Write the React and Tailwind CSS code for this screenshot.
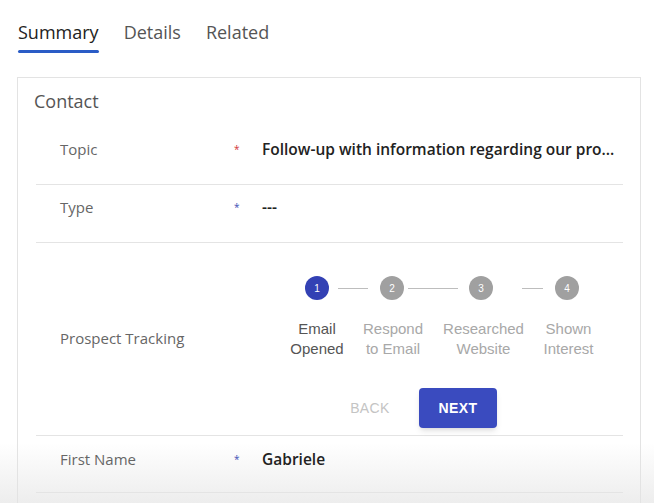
import React from 'react';

const segoe = { fontFamily: '"Open Sans", "Noto Sans", sans-serif' };

const steps = [
  { n: 1, label: ['Email', 'Opened'], active: true, w: 'w-[52px]' },
  { n: 2, label: ['Respond', 'to Email'], w: 'w-[60px]' },
  { n: 3, label: ['Researched', 'Website'], w: 'w-[81px]' },
  { n: 4, label: ['Shown', 'Interest'], w: 'w-[49px]' },
];

function Star({ color }) {
  return <span className={`text-[10px] leading-none ${color}`}>*</span>;
}

function FieldRow({ label, value, star, starColor, className = '' }) {
  return (
    <div className={`flex border-b border-[#e4e4e4] ${className}`}>
      <div className="w-[200px] pl-6 text-[15px] text-[#666]">{label}</div>
      <div className="w-[26px] -mt-[3px] -ml-[2px]">
        {star && <Star color={starColor} />}
      </div>
      <div className="flex-1 pl-[2px] text-[15.5px] font-semibold text-[#222] whitespace-nowrap overflow-hidden text-ellipsis">{value}</div>
    </div>
  );
}

function Circle({ n, active }) {
  return (
    <div
      className={`w-6 h-6 rounded-full flex items-center justify-center text-[10px] text-white ${active ? 'bg-[#3341b4]' : 'bg-[#a0a0a0]'}`}
    >
      {n}
    </div>
  );
}

function Stepper() {
  return (
    <div className="flex flex-col" style={{ fontFamily: '"Liberation Sans", Arial, sans-serif' }}>
      <div className="flex items-center ml-[43px]">
        <Circle n={1} active />
        <div className="ml-[9px] mr-[12px] w-[30px] h-px bg-[#bdbdbd]" />
        <Circle n={2} />
        <div className="ml-[4px] mr-[11px] w-[50px] h-px bg-[#bdbdbd]" />
        <Circle n={3} />
        <div className="ml-[29px] mr-[12px] w-[21px] h-px bg-[#bdbdbd]" />
        <Circle n={4} />
      </div>
      <div className="flex items-start gap-[20px] ml-[29px] mt-[19px]">
        {steps.map((s) => (
          <div
            key={s.n}
            className={`${s.w} shrink-0 text-center text-[15px] leading-[20px] whitespace-nowrap flex flex-col items-center ${s.active ? 'text-[#555]' : 'text-[#a8a8a8]'}`}
          >
            <span>{s.label[0]}</span>
            <span>{s.label[1]}</span>
          </div>
        ))}
      </div>
      <div className="flex items-center gap-[17px] mt-[29px] ml-[76px]">
        <button className="w-[64px] h-10 text-[14px] font-medium tracking-[0.4px] text-[#c4c4c4]">BACK</button>
        <button className="w-[78px] h-10 rounded bg-[#3a4bbf] text-white text-[14px] font-bold tracking-[0.4px] shadow-md">NEXT</button>
      </div>
    </div>
  );
}

export default function App() {
  return (
    <div className="w-[654px] h-[503px] overflow-hidden bg-gradient-to-b from-white via-white via-88% to-[#ededed]" style={segoe}>
      <div className="flex items-end gap-[25px] pl-[18px] pt-[19px] text-[18px] text-[#555]">
        <div className="flex flex-col">
          <span className="text-[#222] leading-[26px]">Summary</span>
          <div className="mt-[5px] h-[3px] rounded-full bg-[#2a5cc6]" />
        </div>
        <span className="leading-[26px] pb-[8px]">Details</span>
        <span className="leading-[26px] pb-[8px]">Related</span>
      </div>

      <div className="ml-[17px] mt-[24px] w-[624px] h-[500px] border border-[#e3e3e3] border-b-0 pl-[18px] pr-[17px]">
        <div className="pt-[10px] -ml-[2px] text-[18px] text-[#555] leading-[26px]">Contact</div>
        <FieldRow
          label="Topic"
          value="Follow-up with information regarding our pro..."
          star
          starColor="text-[#d13438]"
          className="pt-[24px] h-[71px]"
        />
        <FieldRow label="Type" value="---" star starColor="text-[#4050b5]" className="pt-[11px] h-[58px]" />
        <div className="flex border-b border-[#e4e4e4] h-[193px]">
          <div className="w-[200px] pl-6 text-[15px] text-[#666] self-center pb-[2px]">Prospect Tracking</div>
          <div className="pl-[26px] pt-[33px]">
            <Stepper />
          </div>
        </div>
        <FieldRow label="First Name" value="Gabriele" star starColor="text-[#4050b5]" className="pt-[12px] h-[57px]" />
      </div>
    </div>
  );
}
